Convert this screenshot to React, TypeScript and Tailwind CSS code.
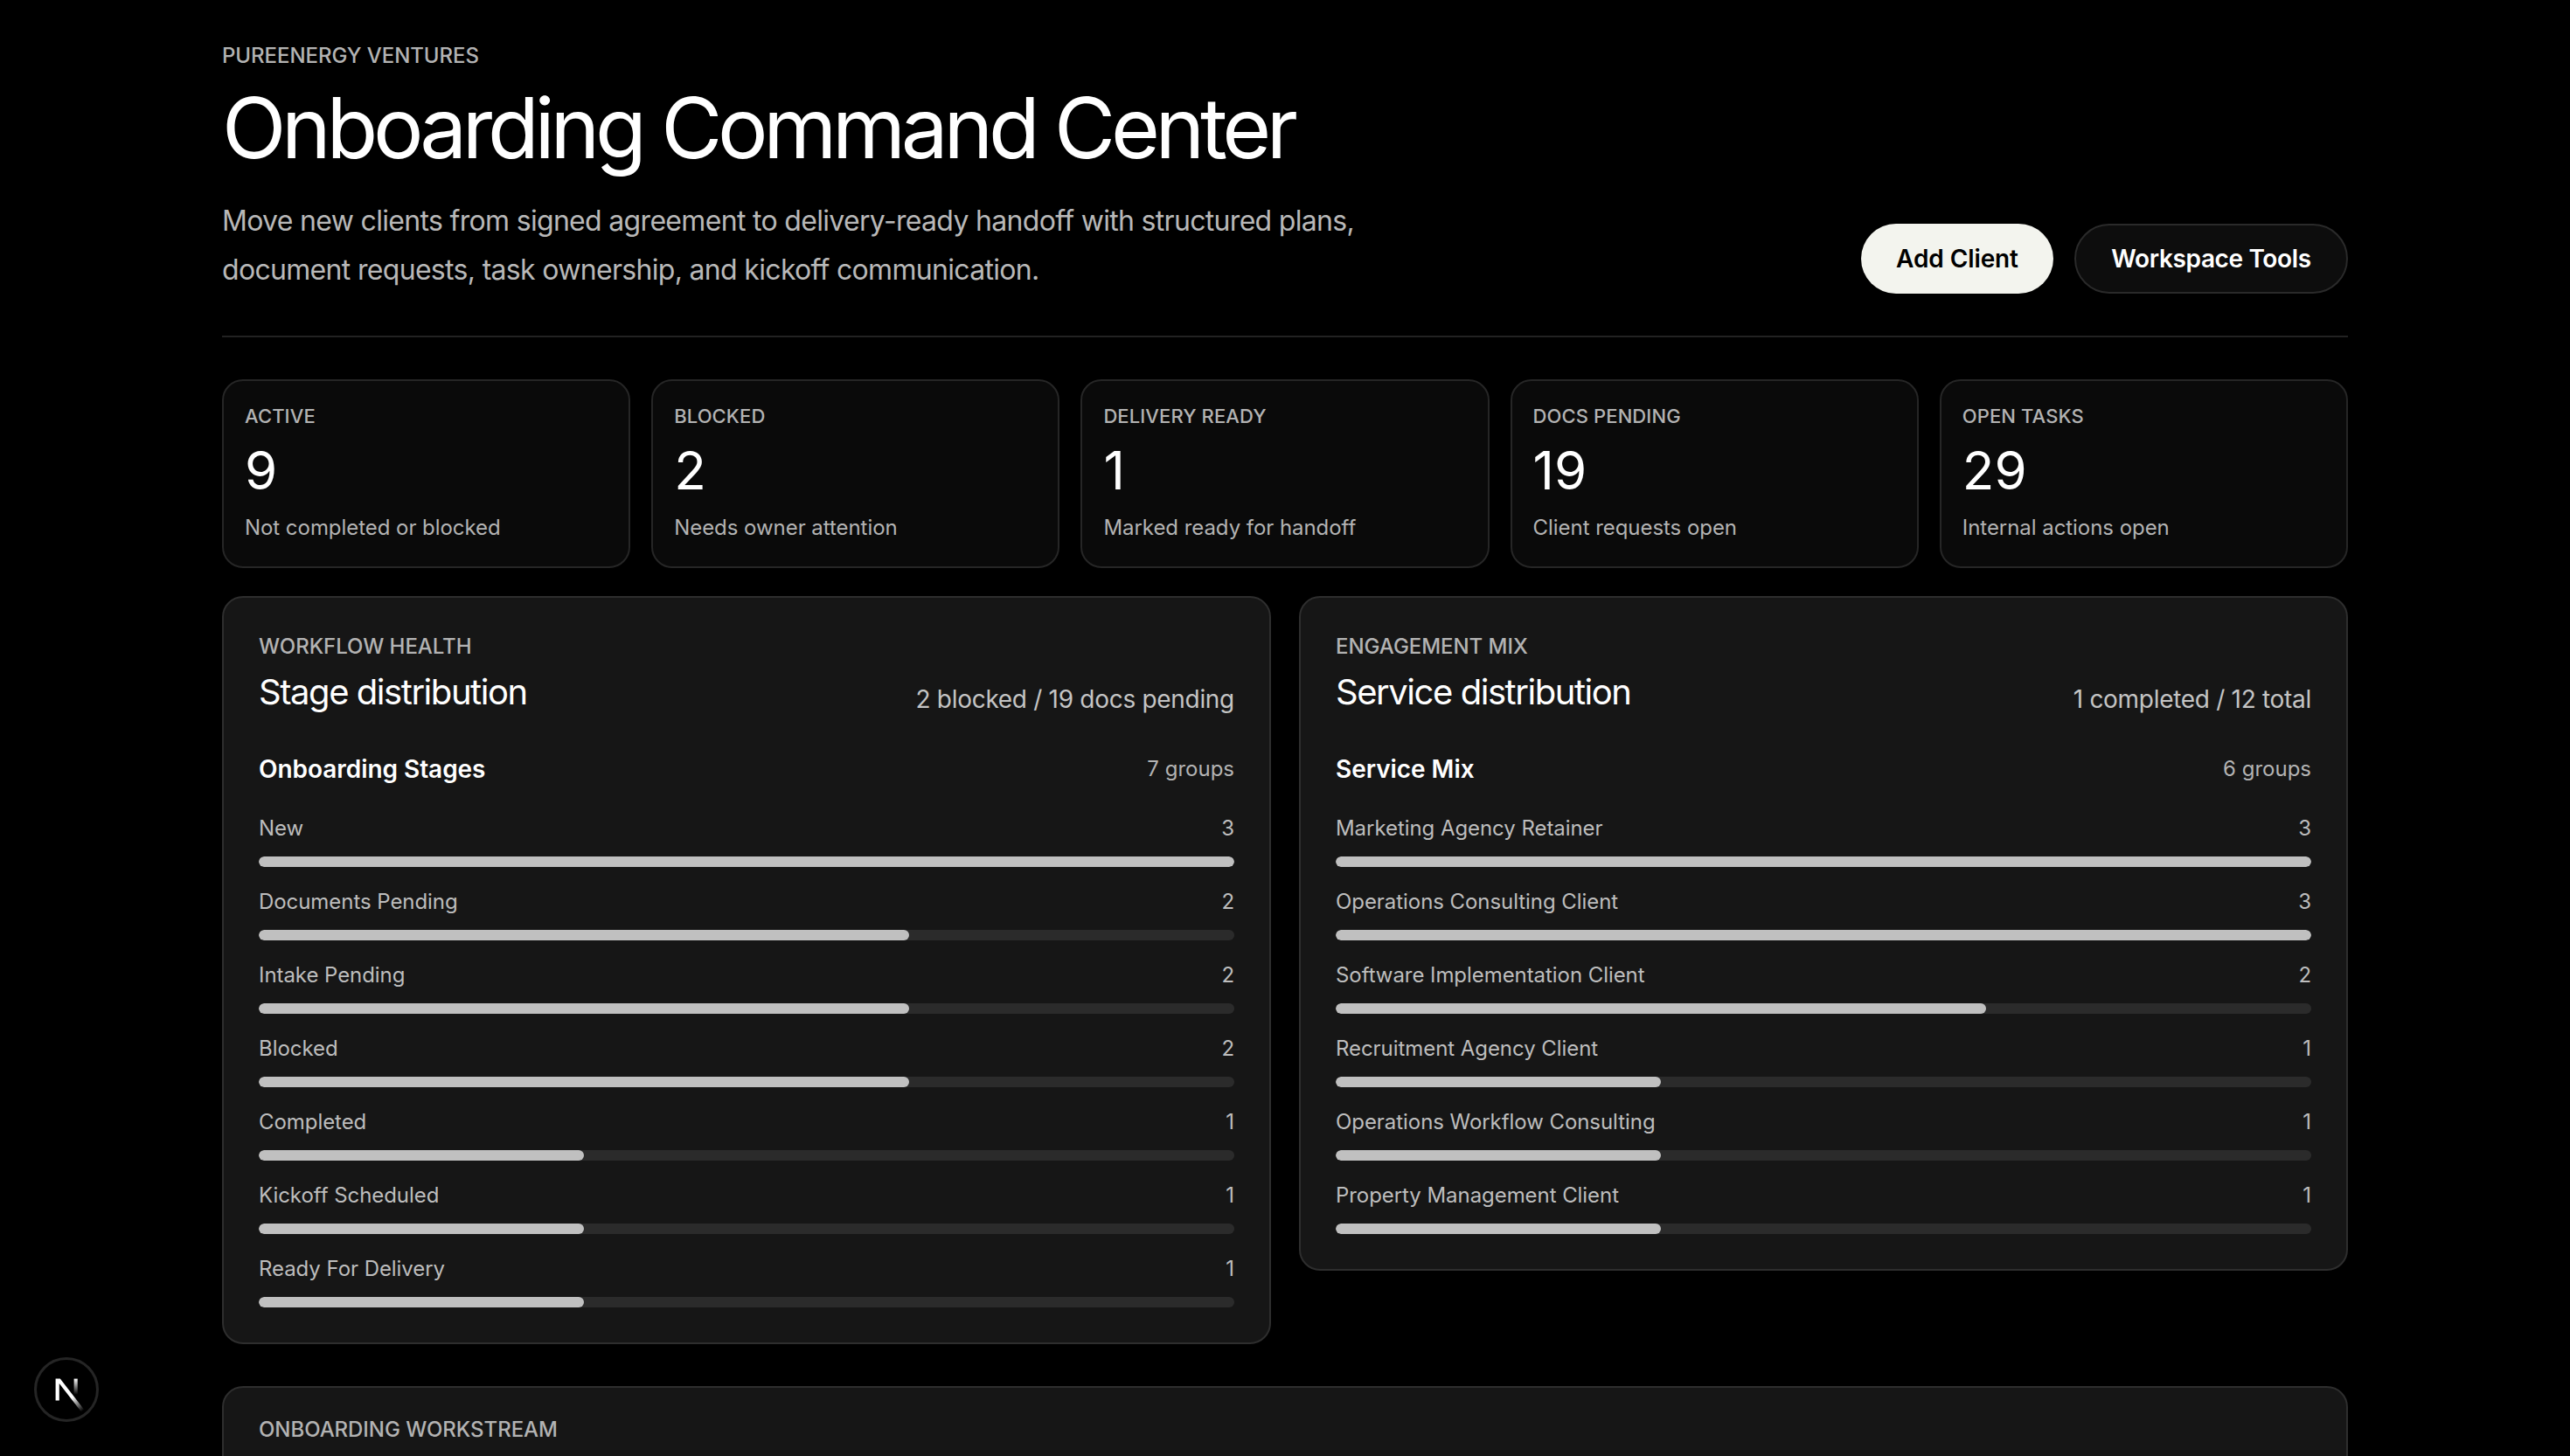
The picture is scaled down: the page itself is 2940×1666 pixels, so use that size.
const stats = [
  ["ACTIVE", "9", "Not completed or blocked"],
  ["BLOCKED", "2", "Needs owner attention"],
  ["DELIVERY READY", "1", "Marked ready for handoff"],
  ["DOCS PENDING", "19", "Client requests open"],
  ["OPEN TASKS", "29", "Internal actions open"],
];

const stages: [string, number][] = [
  ["New", 3],
  ["Documents Pending", 2],
  ["Intake Pending", 2],
  ["Blocked", 2],
  ["Completed", 1],
  ["Kickoff Scheduled", 1],
  ["Ready For Delivery", 1],
];

const services: [string, number][] = [
  ["Marketing Agency Retainer", 3],
  ["Operations Consulting Client", 3],
  ["Software Implementation Client", 2],
  ["Recruitment Agency Client", 1],
  ["Operations Workflow Consulting", 1],
  ["Property Management Client", 1],
];

function Panel(props: {
  eyebrow: string;
  title: string;
  summary: string;
  group: string;
  groups: string;
  rows: [string, number][];
}) {
  const max = Math.max(...props.rows.map((r) => r[1]));
  return (
    <section className="rounded-[24px] border-2 border-[#2e2e2e] bg-[#161616] px-[40px] pt-[40px] pb-[40px]">
      <div className="flex items-end justify-between">
        <div>
          <div className="text-[24px] leading-[32px] font-medium tracking-[-0.05px] text-[#b3b3b3]">{props.eyebrow}</div>
          <h2 className="mt-[12px] text-[40px] leading-[48px] font-normal tracking-[-1.45px] text-white">{props.title}</h2>
        </div>
        <div className="text-[28px] leading-[32px] tracking-[-0.3px] text-[#c4c4c4]">{props.summary}</div>
      </div>
      <div className="mt-[44px] flex items-center justify-between">
        <h3 className="text-[28px] leading-[40px] font-semibold tracking-[-0.05px] text-white">{props.group}</h3>
        <span className="text-[24px] leading-[32px] text-[#b3b3b3]">{props.groups}</span>
      </div>
      <div className="mt-[32px] flex flex-col gap-[24px]">
        {props.rows.map(([name, n]) => (
          <div key={name}>
            <div className="flex items-center justify-between text-[24px] leading-[32px] tracking-[-0.06px] text-[#bdbdbd]">
              <span>{name}</span>
              <span>{n}</span>
            </div>
            <div className="mt-[16px] h-[12px] overflow-hidden rounded-full bg-[#2b2b2b]">
              <div className="h-full rounded-full bg-[#c0c0c0]" style={{ width: `${(n / max) * 100}%` }} />
            </div>
          </div>
        ))}
      </div>
    </section>
  );
}

export default function App() {
  return (
    <div className="relative h-[1666px] overflow-hidden bg-black font-['Inter',sans-serif]">
      <main className="mx-auto w-[2432px] pt-[48px]">
        <header className="flex items-end justify-between border-b-2 border-[#222222] pb-[47px]">
          <div>
            <div className="text-[24px] leading-[32px] font-medium tracking-[-0.05px] text-[#b3b3b3]">PUREENERGY VENTURES</div>
            <h1 className="mt-[14px] text-[96px] leading-[104px] font-normal tracking-[-5.3px] text-white">Onboarding Command Center</h1>
            <p className="mt-[27px] w-[1400px] text-[32px] leading-[56px] tracking-[-0.68px] text-[#b8b8b8]">
              Move new clients from signed agreement to delivery-ready handoff with structured plans, document requests, task ownership, and kickoff communication.
            </p>
          </div>
          <div className="mb-[1px] flex gap-[24px]">
            <button className="h-[80px] w-[220px] rounded-full bg-[#f3f4ee] text-[28px] font-semibold tracking-[-0.1px] text-black">Add Client</button>
            <button className="h-[80px] w-[313px] rounded-full border-2 border-[#2a2a2a] bg-[#0d0d0d] text-[28px] font-semibold tracking-[-0.37px] text-white">Workspace Tools</button>
          </div>
        </header>

        <div className="mt-[48px] grid grid-cols-5 gap-[24px]">
          {stats.map(([label, value, note]) => (
            <div key={label} className="h-[216px] rounded-[24px] border-2 border-[#262626] bg-[#0a0a0a] p-[24px]">
              <div className="text-[22px] leading-[32px] font-medium tracking-[0.1px] text-[#b3b3b3]">{label}</div>
              <div className="mt-[10px] text-[60px] leading-[72px] text-white">{value}</div>
              <div className="mt-[14px] text-[24px] leading-[32px] tracking-[-0.05px] text-[#b3b3b3]">{note}</div>
            </div>
          ))}
        </div>

        <div className="mt-[32px] grid grid-cols-2 items-start gap-[32px]">
          <Panel eyebrow="WORKFLOW HEALTH" title="Stage distribution" summary="2 blocked / 19 docs pending" group="Onboarding Stages" groups="7 groups" rows={stages} />
          <Panel eyebrow="ENGAGEMENT MIX" title="Service distribution" summary="1 completed / 12 total" group="Service Mix" groups="6 groups" rows={services} />
        </div>

        <section className="mt-[48px] h-[400px] rounded-[24px] border-2 border-[#2e2e2e] bg-[#161616] px-[40px] pt-[32px]">
          <div className="text-[24px] leading-[32px] font-medium tracking-[-0.05px] text-[#b3b3b3]">ONBOARDING WORKSTREAM</div>
        </section>
      </main>

      <div className="absolute left-[39px] top-[1553px] flex h-[74px] w-[74px] items-center justify-center rounded-full border-[3px] border-[#252525] bg-black">
        <svg width="62" height="62" viewBox="0 0 180 180" fill="none">
          <defs>
            <linearGradient id="n1" gradientUnits="userSpaceOnUse" x1="109" y1="116.5" x2="144.5" y2="160.5">
              <stop stopColor="white" />
              <stop offset="1" stopColor="white" stopOpacity="0" />
            </linearGradient>
            <linearGradient id="n2" gradientUnits="userSpaceOnUse" x1="121" y1="54" x2="120.8" y2="106.9">
              <stop stopColor="white" />
              <stop offset="1" stopColor="white" stopOpacity="0" />
            </linearGradient>
          </defs>
          <path d="M149.508 157.52L69.142 54H54V125.97H66.1136V69.3836L139.999 164.845C143.333 162.614 146.509 160.165 149.508 157.52Z" fill="url(#n1)" />
          <rect x="115" y="54" width="12" height="72" fill="url(#n2)" />
        </svg>
      </div>
    </div>
  );
}
